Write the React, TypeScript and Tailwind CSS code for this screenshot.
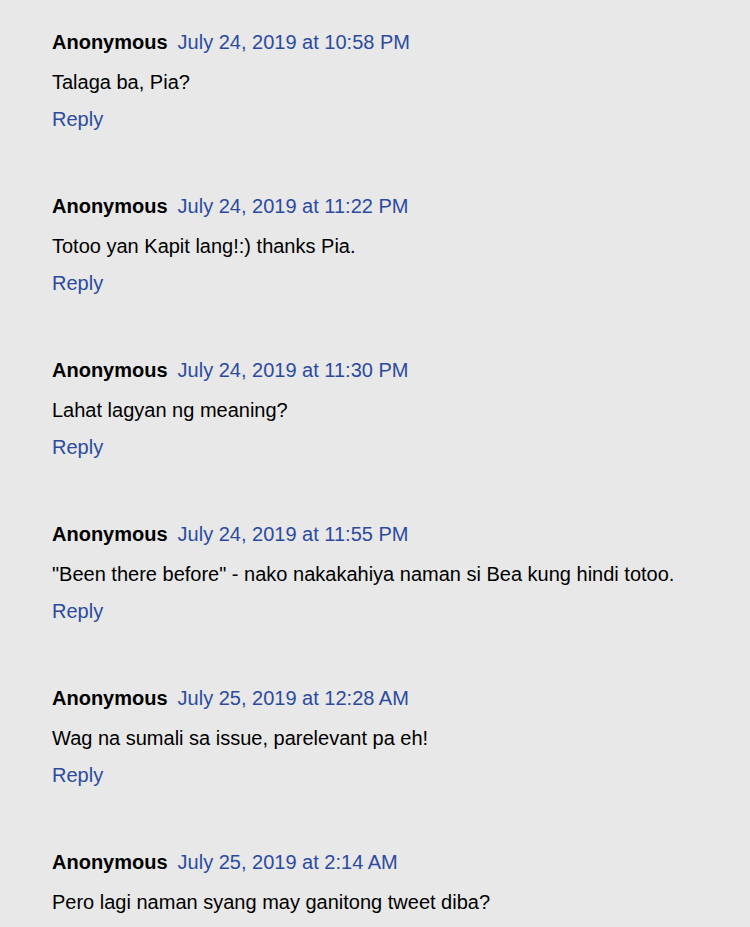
import React from 'react';

type Comment = {
  date: string;
  text: string;
  reply: boolean;
};

// last reply link falls below the fold in the screenshot
const COMMENTS: Comment[] = [
  { date: 'July 24, 2019 at 10:58 PM', text: 'Talaga ba, Pia?', reply: true },
  { date: 'July 24, 2019 at 11:22 PM', text: 'Totoo yan Kapit lang!:) thanks Pia.', reply: true },
  { date: 'July 24, 2019 at 11:30 PM', text: 'Lahat lagyan ng meaning?', reply: true },
  { date: 'July 24, 2019 at 11:55 PM', text: '"Been there before" - nako nakakahiya naman si Bea kung hindi totoo.', reply: true },
  { date: 'July 25, 2019 at 12:28 AM', text: 'Wag na sumali sa issue, parelevant pa eh!', reply: true },
  { date: 'July 25, 2019 at 2:14 AM', text: 'Pero lagi naman syang may ganitong tweet diba?', reply: false },
];

const CommentItem: React.FC<{ comment: Comment }> = ({ comment }) => (
  <div className="mb-[49px]">
    <div className="flex items-center h-[38px] leading-[38px]">
      <span className="font-bold text-black">Anonymous</span>
      <a className="ml-[10px] text-[#2c4b9e]">{comment.date}</a>
    </div>
    <p className="mt-[2px] h-[38px] leading-[38px] text-black">{comment.text}</p>
    {comment.reply && <a className="block -mt-px h-[38px] leading-[38px] text-[#2c4b9e]">Reply</a>}
  </div>
);

export default function App() {
  return (
    <div
      className="w-[750px] h-[927px] overflow-hidden bg-[#e8e8e8] pl-[52px] pt-[23px] text-[20px]"
      style={{ fontFamily: '"Liberation Sans", Arial, sans-serif' }}
    >
      {COMMENTS.map((c, i) => (
        <CommentItem key={i} comment={c} />
      ))}
    </div>
  );
}
